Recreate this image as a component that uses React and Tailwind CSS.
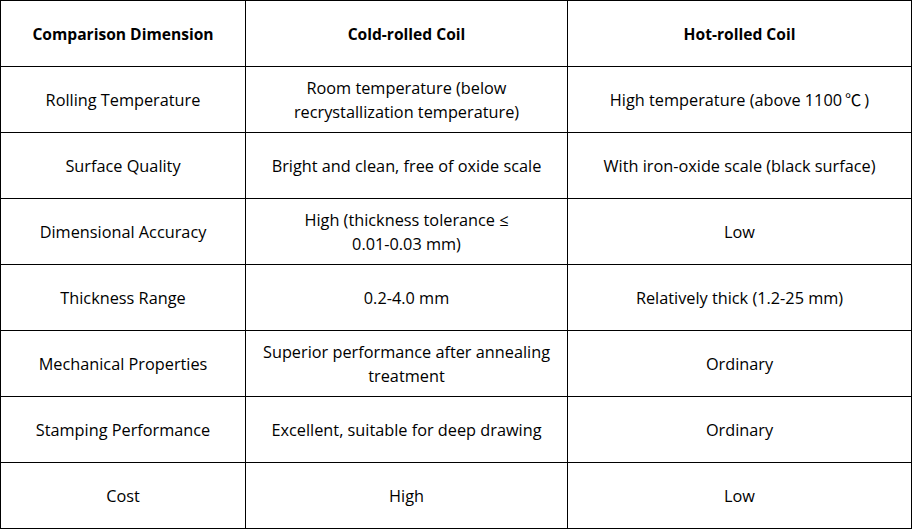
import React from "react";

const C = <span className="mx-[3px]" style={{ fontFamily: '"Noto Sans CJK SC", sans-serif' }}>℃</span>;

const rows = [
  ["Rolling Temperature", ["Room temperature (below", "recrystallization temperature)"], [<>High temperature (above 1100{C})</>]],
  ["Surface Quality", ["Bright and clean, free of oxide scale"], ["With iron-oxide scale (black surface)"]],
  ["Dimensional Accuracy", ["High (thickness tolerance ≤", "0.01-0.03 mm)"], ["Low"]],
  ["Thickness Range", ["0.2-4.0 mm"], ["Relatively thick (1.2-25 mm)"]],
  ["Mechanical Properties", ["Superior performance after annealing", "treatment"], ["Ordinary"]],
  ["Stamping Performance", ["Excellent, suitable for deep drawing"], ["Ordinary"]],
  ["Cost", ["High"], ["Low"]],
];

function Lines({ lines }) {
  return lines.map((l, i) => (
    <div key={i}>{l}</div>
  ));
}

export default function App() {
  return (
    <div className="w-[912px] h-[529px] bg-white text-black" style={{ fontFamily: '"Open Sans", "Noto Sans CJK SC", sans-serif' }}>
      <table className="table-fixed border-collapse border border-black w-[911px] text-[16.3px] leading-[24px]">
        <colgroup>
          <col className="w-[245px]" />
          <col className="w-[322px]" />
          <col className="w-[344px]" />
        </colgroup>
        <thead>
          <tr className="h-[66px] text-[15.6px]">
            <th className="border border-black font-bold text-center align-middle">Comparison Dimension</th>
            <th className="border border-black font-bold text-center align-middle">Cold-rolled Coil</th>
            <th className="border border-black font-bold text-center align-middle">Hot-rolled Coil</th>
          </tr>
        </thead>
        <tbody>
          {rows.map((r, i) => (
            <tr key={i} className="h-[66px]">
              <td className="border border-black text-center align-middle">{r[0]}</td>
              <td className="border border-black text-center align-middle"><Lines lines={r[1]} /></td>
              <td className="border border-black text-center align-middle"><Lines lines={r[2]} /></td>
            </tr>
          ))}
        </tbody>
      </table>
    </div>
  );
}
